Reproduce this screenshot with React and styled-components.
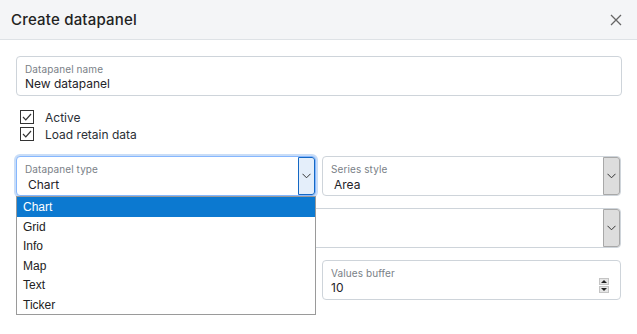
import React from 'react';
import styled, { createGlobalStyle } from 'styled-components';

const Global = createGlobalStyle`
  body {
    margin: 0;
    background: #fff;
    font-family: Inter, "Open Sans", sans-serif;
  }
`;

const Dialog = styled.div`
  width: 637px;
  height: 334px;
  background: #fff;
  overflow: hidden;
`;

const Header = styled.div`
  height: 39px;
  background: #f4f5f7;
  border-bottom: 1px solid #dee2e6;
  display: flex;
  align-items: center;
  justify-content: space-between;
  padding: 0 14px 0 11px;
`;

const Title = styled.h1`
  margin: 0;
  font-size: 15px;
  font-weight: 500;
  color: #222;
  letter-spacing: 0.2px;
`;

const Close = styled.button`
  border: 0;
  background: none;
  padding: 0;
  width: 14px;
  height: 14px;
  display: flex;
`;

const Body = styled.div`
  padding: 16px 15px 0 16px;
  display: flex;
  flex-direction: column;
`;

const Field = styled.div`
  position: relative;
  height: 40px;
  box-sizing: border-box;
  border: 1px solid ${p => (p.focus ? '#86b7fe' : '#ced4da')};
  box-shadow: ${p => (p.focus ? '0 0 0 2px #c9ddf7' : 'none')};
  border-radius: 4px;
  padding: 6px 9px 0 8px;
  display: flex;
  flex-direction: column;
  background: #fff;
`;

const Label = styled.span`
  font-size: 10px;
  color: #7a7f87;
  line-height: 13px;
  letter-spacing: 0.1px;
`;

const Value = styled.span`
  font-size: 12px;
  color: #1f2329;
  line-height: 15px;
  padding-left: ${p => (p.indent ? '3px' : '0')};
  margin-top: ${p => (p.indent ? '1px' : '0')};
`;

const Checks = styled.div`
  margin-top: 14px;
  display: flex;
  flex-direction: column;
  gap: 3px;
  padding-left: 4px;
`;

const CheckRow = styled.label`
  display: flex;
  align-items: center;
  gap: 11px;
  font-size: 12px;
  color: #2b2f36;
  height: 14px;
`;

const Box = styled.span`
  width: 12px;
  height: 12px;
  border: 1px solid #333;
  display: flex;
  align-items: center;
  justify-content: center;
  flex: none;
`;

const Grid = styled.div`
  margin-top: 15px;
  display: grid;
  grid-template-columns: 300px 299px;
  column-gap: 6px;
  row-gap: 12px;
  position: relative;
`;

const Full = styled.div`
  grid-column: 1 / span 2;
`;

const Arrow = styled.span`
  position: absolute;
  top: 0;
  right: 0;
  bottom: 0;
  width: 17px;
  box-sizing: border-box;
  display: flex;
  align-items: center;
  justify-content: center;
  background: ${p => (p.focus ? '#e4eefa' : '#dddddd')};
  border: 1px solid ${p => (p.focus ? '#1468c4' : '#a8a8a8')};
  border-radius: 0 3px 3px 0;
`;

const Spinner = styled.span`
  position: absolute;
  right: 11px;
  top: 17px;
  width: 10px;
  display: flex;
  flex-direction: column;
  gap: 1px;
`;

const SpinBtn = styled.span`
  height: 7px;
  background: #e6e6e6;
  border: 1px solid #c4c4c4;
  box-sizing: border-box;
  display: flex;
  align-items: center;
  justify-content: center;
`;

const List = styled.ul`
  position: absolute;
  left: 0;
  top: 40px;
  width: 300px;
  box-sizing: border-box;
  margin: 0;
  padding: 0;
  list-style: none;
  background: #fff;
  border: 1px solid #9a9a9a;
  font-family: "Liberation Sans", Arial, sans-serif;
  font-size: 12px;
  z-index: 2;
`;

const Option = styled.li`
  height: 19.5px;
  line-height: 21.5px;
  overflow: hidden;
  padding-left: 6px;
  color: ${p => (p.active ? '#fff' : '#222')};
  background: ${p => (p.active ? '#0c79d0' : 'transparent')};
`;

const Chevron = () => (
  <svg width="9" height="6" viewBox="0 0 9 6">
    <path d="M0.5 0.8 L4.5 4.8 L8.5 0.8" fill="none" stroke="#333" strokeWidth="1" />
  </svg>
);

const Check = () => (
  <svg width="10" height="8" viewBox="0 0 10 8">
    <path d="M1 4 L3.8 6.8 L9 1" fill="none" stroke="#333" strokeWidth="1.2" />
  </svg>
);

const Tri = ({ up }) => (
  <svg width="6" height="3" viewBox="0 0 6 3">
    <path d={up ? 'M0 3 L3 0 L6 3Z' : 'M0 0 L3 3 L6 0Z'} fill="#222" />
  </svg>
);

const options = ['Chart', 'Grid', 'Info', 'Map', 'Text', 'Ticker'];

export default function App() {
  return (
    <Dialog>
      <Global />
      <Header>
        <Title>Create datapanel</Title>
        <Close aria-label="close">
          <svg width="14" height="14" viewBox="0 0 14 14">
            <path d="M2 2 L12 12 M12 2 L2 12" stroke="#666" strokeWidth="1.3" />
          </svg>
        </Close>
      </Header>
      <Body>
        <Field>
          <Label>Datapanel name</Label>
          <Value>New datapanel</Value>
        </Field>
        <Checks>
          <CheckRow><Box><Check /></Box>Active</CheckRow>
          <CheckRow><Box><Check /></Box>Load retain data</CheckRow>
        </Checks>
        <Grid>
          <Field focus>
            <Label>Datapanel type</Label>
            <Value indent>Chart</Value>
            <Arrow focus><Chevron /></Arrow>
          </Field>
          <Field>
            <Label>Series style</Label>
            <Value indent>Area</Value>
            <Arrow><Chevron /></Arrow>
          </Field>
          <Full>
            <Field>
              <Arrow><Chevron /></Arrow>
            </Field>
          </Full>
          <Field />
          <Field>
            <Label>Values buffer</Label>
            <Value>10</Value>
            <Spinner>
              <SpinBtn><Tri up /></SpinBtn>
              <SpinBtn><Tri /></SpinBtn>
            </Spinner>
          </Field>
          <List>
            {options.map((o, i) => (
              <Option key={o} active={i === 0}>{o}</Option>
            ))}
          </List>
        </Grid>
      </Body>
    </Dialog>
  );
}
